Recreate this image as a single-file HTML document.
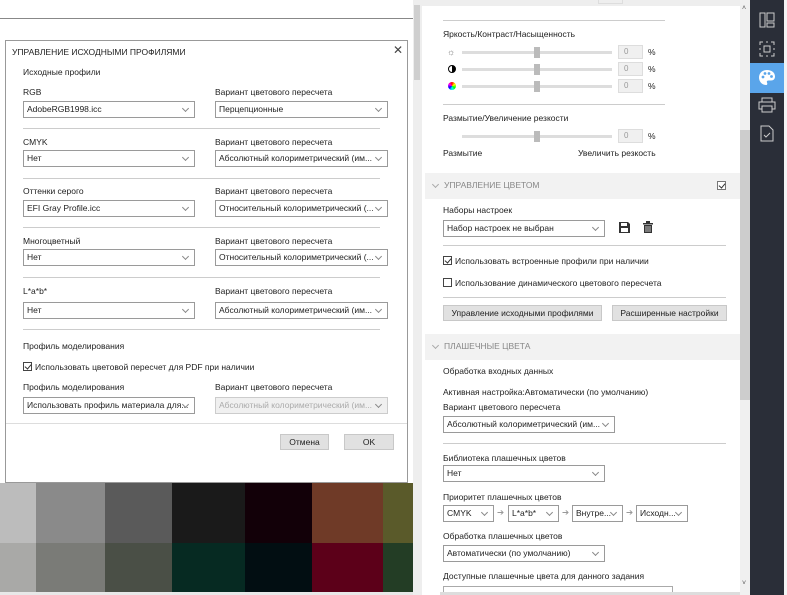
<!DOCTYPE html>
<html><head><meta charset="utf-8"><style>
*{box-sizing:border-box;margin:0;padding:0}
body{width:787px;height:595px;overflow:hidden;position:relative;background:#fff;font-family:"Segoe UI","Liberation Sans","DejaVu Sans",sans-serif;font-size:8.5px;color:#222}
.a{position:absolute;white-space:nowrap}
.sel{position:absolute;height:17px;border:1px solid #9a9a9a;background:#fff;padding:2px 3px;font-size:8.5px;overflow:hidden;white-space:nowrap}
.sel:after{content:"";position:absolute;right:6px;top:4px;width:4px;height:4px;border-right:1px solid #888;border-bottom:1px solid #888;transform:rotate(45deg)}
.sel.dis{background:#f0f0f0;border-color:#ccc;color:#aaa}
.hr{position:absolute;height:1px;background:#ccc}
.btn{position:absolute;height:16px;background:#e1e1e1;border:1px solid #c8c8c8;text-align:center;line-height:14px;font-size:8.5px}
.cb{display:inline-block;width:9px;height:9px;border:1px solid #444;vertical-align:-1px;margin-right:3px;position:relative;background:#fff}
.cb.on:after{content:"";position:absolute;left:2px;top:0px;width:3px;height:5px;border-right:1px solid #333;border-bottom:1px solid #333;transform:rotate(40deg)}
.sw{position:absolute}
.sl{position:absolute;height:3px;background:#ddd;width:150px;left:462px}
.th{position:absolute;width:6px;height:11px;background:#bbb;left:534px}
.num{position:absolute;left:618px;width:25px;height:14px;background:#f0f0f0;border:1px solid #ddd;color:#999;font-size:8px;padding:1px 5px}
.sec{position:absolute;left:425px;width:315px;height:26px;background:#f2f2f2;color:#888;font-size:8.5px;padding:7px 0 0 19px}
.sec:before{content:"";position:absolute;left:8px;top:9px;width:4px;height:4px;border-right:1px solid #aaa;border-bottom:1px solid #aaa;transform:rotate(45deg)}
</style></head><body>
<!-- left background -->
<div class="a" style="left:0;top:18px;width:413px;height:1px;background:#888"></div>
<div class="a" style="left:413px;top:0;width:9px;height:595px;background:#eee"></div>
<div class="a" style="left:414px;top:5px;width:6px;height:75px;background:#cfcfcf"></div>
<div class="sw" style="left:0;top:483px;width:36px;height:60px;background:#bcbcbc"></div>
<div class="sw" style="left:36px;top:483px;width:69px;height:60px;background:#8a8a8a"></div>
<div class="sw" style="left:105px;top:483px;width:67px;height:60px;background:#5a5a5a"></div>
<div class="sw" style="left:172px;top:483px;width:73px;height:60px;background:#1a1a1a"></div>
<div class="sw" style="left:245px;top:483px;width:67px;height:60px;background:#120008"></div>
<div class="sw" style="left:312px;top:483px;width:71px;height:60px;background:#6f3a27"></div>
<div class="sw" style="left:383px;top:483px;width:30px;height:60px;background:#5a5a2a"></div>
<div class="sw" style="left:0;top:543px;width:36px;height:49px;background:#a9a9a7"></div>
<div class="sw" style="left:36px;top:543px;width:69px;height:49px;background:#7a7b77"></div>
<div class="sw" style="left:105px;top:543px;width:67px;height:49px;background:#4a4f46"></div>
<div class="sw" style="left:172px;top:543px;width:73px;height:49px;background:#062a22"></div>
<div class="sw" style="left:245px;top:543px;width:67px;height:49px;background:#020e12"></div>
<div class="sw" style="left:312px;top:543px;width:71px;height:49px;background:#5c0019"></div>
<div class="sw" style="left:383px;top:543px;width:30px;height:49px;background:#233d25"></div>
<div class="a" style="left:0;top:592px;width:413px;height:3px;background:#e8e8e8"></div>

<!-- dialog -->
<div class="a" style="left:5px;top:40px;width:403px;height:443px;background:#fff;border:1px solid #999"></div>
<div class="a" style="left:12px;top:47px;font-size:8.5px">УПРАВЛЕНИЕ ИСХОДНЫМИ ПРОФИЛЯМИ</div>
<div class="a" style="left:393px;top:43px;font-size:12px;color:#444">✕</div>
<div class="a" style="left:23px;top:67px">Исходные профили</div>

<div class="a" style="left:23px;top:87px">RGB</div><div class="a" style="left:215px;top:87px">Вариант цветового пересчета</div>
<div class="sel" style="left:23px;top:101px;width:172px">AdobeRGB1998.icc</div><div class="sel" style="left:215px;top:101px;width:173px">Перцепционные</div>
<div class="hr" style="left:23px;top:128px;width:357px"></div>

<div class="a" style="left:23px;top:137px">CMYK</div><div class="a" style="left:215px;top:137px">Вариант цветового пересчета</div>
<div class="sel" style="left:23px;top:150px;width:172px">Нет</div><div class="sel" style="left:215px;top:150px;width:173px">Абсолютный колориметрический (им...</div>
<div class="hr" style="left:23px;top:178px;width:357px"></div>

<div class="a" style="left:23px;top:186px">Оттенки серого</div><div class="a" style="left:215px;top:186px">Вариант цветового пересчета</div>
<div class="sel" style="left:23px;top:200px;width:172px">EFI Gray Profile.icc</div><div class="sel" style="left:215px;top:200px;width:173px">Относительный колориметрический (...</div>
<div class="hr" style="left:23px;top:227px;width:357px"></div>

<div class="a" style="left:23px;top:236px">Многоцветный</div><div class="a" style="left:215px;top:236px">Вариант цветового пересчета</div>
<div class="sel" style="left:23px;top:249px;width:172px">Нет</div><div class="sel" style="left:215px;top:249px;width:173px">Относительный колориметрический (...</div>
<div class="hr" style="left:23px;top:277px;width:357px"></div>

<div class="a" style="left:23px;top:286px">L*a*b*</div><div class="a" style="left:215px;top:286px">Вариант цветового пересчета</div>
<div class="sel" style="left:23px;top:302px;width:172px">Нет</div><div class="sel" style="left:215px;top:302px;width:173px">Абсолютный колориметрический (им...</div>
<div class="hr" style="left:23px;top:329px;width:357px"></div>

<div class="a" style="left:23px;top:341px">Профиль моделирования</div>
<div class="a" style="left:23px;top:362px"><span class="cb on"></span>Использовать цветовой пересчет для PDF при наличии</div>
<div class="a" style="left:23px;top:382px">Профиль моделирования</div><div class="a" style="left:215px;top:382px">Вариант цветового пересчета</div>
<div class="sel" style="left:23px;top:397px;width:172px">Использовать профиль материала для...</div><div class="sel dis" style="left:215px;top:397px;width:173px">Абсолютный колориметрический (им...</div>
<div class="hr" style="left:6px;top:423px;width:401px;background:#ddd"></div>
<div class="btn" style="left:280px;top:434px;width:49px">Отмена</div>
<div class="btn" style="left:344px;top:434px;width:50px">OK</div>

<!-- right panel -->
<div class="a" style="left:422px;top:0;width:318px;height:6px;background:#eee"></div>
<div class="a" style="left:598px;top:0;width:25px;height:4px;border:1px solid #ddd;border-top:none"></div>
<div class="hr" style="left:443px;top:20px;width:222px"></div>
<div class="a" style="left:443px;top:29px">Яркость/Контраст/Насыщенность</div>
<div class="a" style="left:447px;top:47px;color:#777;font-size:9px">☼</div>
<div class="a" style="left:448px;top:65px;width:8px;height:8px;border-radius:50%;border:1px solid #000;background:linear-gradient(90deg,#fff 50%,#000 50%)"></div>
<div class="a" style="left:448px;top:82px;width:8px;height:8px;border-radius:50%;background:conic-gradient(red,yellow,lime,cyan,blue,magenta,red)"></div>
<div class="sl" style="top:51px"></div><div class="th" style="top:47px"></div><div class="num" style="top:45px">0</div><div class="a" style="left:648px;top:47px">%</div>
<div class="sl" style="top:68px"></div><div class="th" style="top:64px"></div><div class="num" style="top:62px">0</div><div class="a" style="left:648px;top:64px">%</div>
<div class="sl" style="top:85px"></div><div class="th" style="top:81px"></div><div class="num" style="top:79px">0</div><div class="a" style="left:648px;top:81px">%</div>
<div class="hr" style="left:443px;top:104px;width:222px"></div>
<div class="a" style="left:443px;top:113px">Размытие/Увеличение резкости</div>
<div class="sl" style="top:135px"></div><div class="th" style="top:131px"></div><div class="num" style="top:129px">0</div><div class="a" style="left:648px;top:131px">%</div>
<div class="a" style="left:443px;top:148px">Размытие</div><div class="a" style="left:578px;top:148px">Увеличить резкость</div>

<div class="sec" style="top:173px">УПРАВЛЕНИЕ ЦВЕТОМ</div>
<div class="a" style="left:717px;top:181px"><span class="cb on" style="border-color:#777"></span></div>
<div class="a" style="left:443px;top:205px">Наборы настроек</div>
<div class="sel" style="left:443px;top:220px;width:162px">Набор настроек не выбран</div>
<svg class="a" style="left:619px;top:222px" width="11" height="11" viewBox="0 0 11 11"><path d="M0 0h9l2 2v9H0z" fill="#333"/><rect x="2" y="1" width="6" height="3" fill="#fff"/><rect x="2" y="6" width="7" height="4" fill="#fff"/></svg>
<svg class="a" style="left:643px;top:221px" width="10" height="12" viewBox="0 0 10 12"><rect x="0" y="2" width="10" height="1.5" fill="#333"/><rect x="3" y="0" width="4" height="2" fill="#333"/><path d="M1 4h8v8H1z" fill="#333"/><path d="M3 5v6M5 5v6M7 5v6" stroke="#fff" stroke-width=".7"/></svg>
<div class="hr" style="left:443px;top:245px;width:283px"></div>
<div class="a" style="left:443px;top:256px"><span class="cb on"></span>Использовать встроенные профили при наличии</div>
<div class="a" style="left:443px;top:278px"><span class="cb"></span>Использование динамического цветового пересчета</div>
<div class="hr" style="left:443px;top:297px;width:283px"></div>
<div class="btn" style="left:443px;top:305px;width:159px">Управление исходными профилями</div>
<div class="btn" style="left:612px;top:305px;width:115px">Расширенные настройки</div>

<div class="sec" style="top:334px">ПЛАШЕЧНЫЕ ЦВЕТА</div>
<div class="a" style="left:443px;top:366px">Обработка входных данных</div>
<div class="a" style="left:443px;top:387px">Активная настройка:Автоматически (по умолчанию)</div>
<div class="a" style="left:443px;top:402px">Вариант цветового пересчета</div>
<div class="sel" style="left:443px;top:416px;width:172px">Абсолютный колориметрический (им...</div>
<div class="hr" style="left:443px;top:443px;width:283px"></div>
<div class="a" style="left:443px;top:453px">Библиотека плашечных цветов</div>
<div class="sel" style="left:443px;top:465px;width:162px">Нет</div>
<div class="a" style="left:443px;top:492px">Приоритет плашечных цветов</div>
<div class="sel" style="left:443px;top:505px;width:51px">CMYK</div>
<div class="a" style="left:497px;top:507px;color:#999">➔</div>
<div class="sel" style="left:508px;top:505px;width:51px">L*a*b*</div>
<div class="a" style="left:562px;top:507px;color:#999">➔</div>
<div class="sel" style="left:572px;top:505px;width:51px">Внутре...</div>
<div class="a" style="left:626px;top:507px;color:#999">➔</div>
<div class="sel" style="left:636px;top:505px;width:52px">Исходн...</div>
<div class="a" style="left:443px;top:531px">Обработка плашечных цветов</div>
<div class="sel" style="left:443px;top:545px;width:162px">Автоматически (по умолчанию)</div>
<div class="a" style="left:443px;top:571px">Доступные плашечные цвета для данного задания</div>
<div class="a" style="left:443px;top:586px;width:230px;height:9px;border:1px solid #aaa;border-bottom:none"></div>
<div class="a" style="left:440px;top:592px;width:300px;height:3px;background:#ddd"></div>

<!-- scrollbar -->
<div class="a" style="left:740px;top:0;width:10px;height:595px;background:#f0f0f0"></div>
<div class="a" style="left:740px;top:130px;width:10px;height:270px;background:#cdcdcd"></div>
<div class="a" style="left:742px;top:5px;font-size:7px;color:#555">˄</div>
<div class="a" style="left:742px;top:580px;font-size:7px;color:#555">˅</div>

<!-- sidebar -->
<div class="a" style="left:750px;top:0;width:34px;height:595px;background:#2a2e38"></div>
<div class="a" style="left:750px;top:63px;width:34px;height:30px;background:#5aa5ea"></div>
<svg class="a" style="left:759px;top:12px" width="16" height="16" viewBox="0 0 16 16" fill="none" stroke="#ccc"><rect x="1" y="1" width="5" height="14"/><rect x="8" y="1" width="7" height="8"/><rect x="8" y="11" width="7" height="4"/></svg>
<svg class="a" style="left:759px;top:41px" width="16" height="16" viewBox="0 0 16 16" fill="none" stroke="#ccc"><rect x="5" y="5" width="6" height="6"/><path d="M1 4V1h3M12 1h3v3M15 12v3h-3M4 15H1v-3M7 1h2M7 15h2M1 7v2M15 7v2"/></svg>
<svg class="a" style="left:758px;top:69px" width="18" height="17" viewBox="0 0 18 17"><path d="M9 1C4 1 1 4.5 1 8.5S4 16 8 16c1.5 0 1.5-1.5 1-2.5s0-2 1.5-2H13c2.5 0 4-1.5 4-4C17 3.5 13.5 1 9 1z" fill="#fff"/><circle cx="5" cy="8" r="1.4" fill="#5aa5ea"/><circle cx="7" cy="4.5" r="1.4" fill="#5aa5ea"/><circle cx="11" cy="4.5" r="1.4" fill="#5aa5ea"/><circle cx="13.5" cy="7.5" r="1.4" fill="#5aa5ea"/></svg>
<svg class="a" style="left:758px;top:97px" width="18" height="16" viewBox="0 0 18 16" fill="none" stroke="#ccc"><rect x="4" y="1" width="10" height="4"/><rect x="1" y="5" width="16" height="7"/><rect x="4" y="9" width="10" height="6" fill="#2a2e38"/></svg>
<svg class="a" style="left:760px;top:125px" width="14" height="17" viewBox="0 0 14 17" fill="none" stroke="#ccc"><path d="M1 1h8l4 4v11H1z"/><path d="M4 10l2 2 4-4"/></svg>
<div class="a" style="left:784px;top:0;width:3px;height:595px;background:#f4f4f4"></div>
</body></html>
